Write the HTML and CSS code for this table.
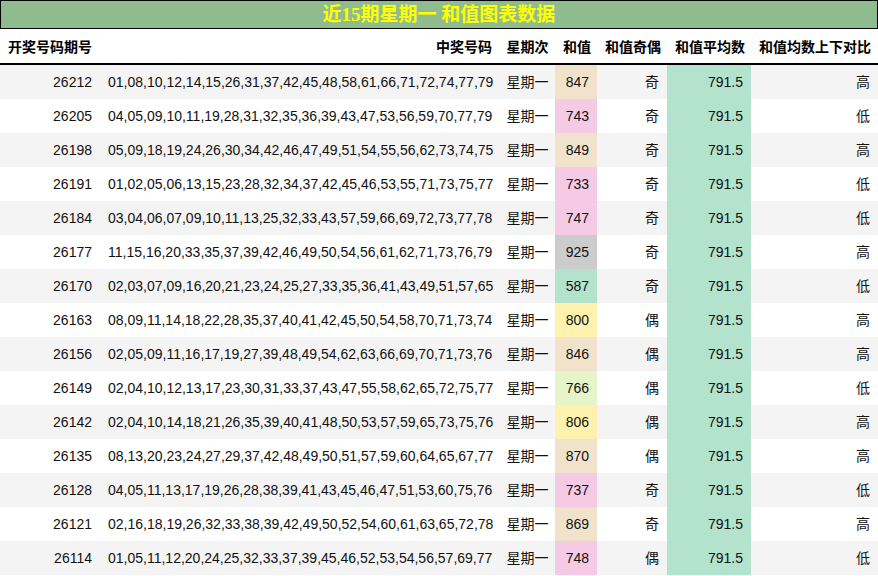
FILE: index.html
```html
<!DOCTYPE html>
<html lang="zh-CN">
<head>
<meta charset="utf-8">
<title>近15期星期一 和值图表数据</title>
<link rel="stylesheet" href="styles.css">
</head>
<body>
<div class="title">近15期星期一 和值图表数据</div>
<table class="data">
<colgroup>
<col class="c1"><col class="c2"><col class="c3"><col class="c4"><col class="c5"><col class="c6"><col class="c7">
</colgroup>
<thead>
<tr><th class="left">开奖号码期号</th><th>中奖号码</th><th class="mid">星期次</th><th>和值</th><th>和值奇偶</th><th>和值平均数</th><th>和值均数上下对比</th></tr>
</thead>
<tbody>
<tr><td>26212</td><td>01,08,10,12,14,15,26,31,37,42,45,48,58,61,66,71,72,74,77,79</td><td class="mid">星期一</td><td class="tan">847</td><td>奇</td><td class="avg">791.5</td><td>高</td></tr>
<tr><td>26205</td><td>04,05,09,10,11,19,28,31,32,35,36,39,43,47,53,56,59,70,77,79</td><td class="mid">星期一</td><td class="pink">743</td><td>奇</td><td class="avg">791.5</td><td>低</td></tr>
<tr><td>26198</td><td>05,09,18,19,24,26,30,34,42,46,47,49,51,54,55,56,62,73,74,75</td><td class="mid">星期一</td><td class="tan">849</td><td>奇</td><td class="avg">791.5</td><td>高</td></tr>
<tr><td>26191</td><td>01,02,05,06,13,15,23,28,32,34,37,42,45,46,53,55,71,73,75,77</td><td class="mid">星期一</td><td class="pink">733</td><td>奇</td><td class="avg">791.5</td><td>低</td></tr>
<tr><td>26184</td><td>03,04,06,07,09,10,11,13,25,32,33,43,57,59,66,69,72,73,77,78</td><td class="mid">星期一</td><td class="pink">747</td><td>奇</td><td class="avg">791.5</td><td>低</td></tr>
<tr><td>26177</td><td>11,15,16,20,33,35,37,39,42,46,49,50,54,56,61,62,71,73,76,79</td><td class="mid">星期一</td><td class="gray">925</td><td>奇</td><td class="avg">791.5</td><td>高</td></tr>
<tr><td>26170</td><td>02,03,07,09,16,20,21,23,24,25,27,33,35,36,41,43,49,51,57,65</td><td class="mid">星期一</td><td class="green">587</td><td>奇</td><td class="avg">791.5</td><td>低</td></tr>
<tr><td>26163</td><td>08,09,11,14,18,22,28,35,37,40,41,42,45,50,54,58,70,71,73,74</td><td class="mid">星期一</td><td class="yellow">800</td><td>偶</td><td class="avg">791.5</td><td>高</td></tr>
<tr><td>26156</td><td>02,05,09,11,16,17,19,27,39,48,49,54,62,63,66,69,70,71,73,76</td><td class="mid">星期一</td><td class="tan">846</td><td>偶</td><td class="avg">791.5</td><td>高</td></tr>
<tr><td>26149</td><td>02,04,10,12,13,17,23,30,31,33,37,43,47,55,58,62,65,72,75,77</td><td class="mid">星期一</td><td class="lime">766</td><td>偶</td><td class="avg">791.5</td><td>低</td></tr>
<tr><td>26142</td><td>02,04,10,14,18,21,26,35,39,40,41,48,50,53,57,59,65,73,75,76</td><td class="mid">星期一</td><td class="yellow">806</td><td>偶</td><td class="avg">791.5</td><td>高</td></tr>
<tr><td>26135</td><td>08,13,20,23,24,27,29,37,42,48,49,50,51,57,59,60,64,65,67,77</td><td class="mid">星期一</td><td class="tan">870</td><td>偶</td><td class="avg">791.5</td><td>高</td></tr>
<tr><td>26128</td><td>04,05,11,13,17,19,26,28,38,39,41,43,45,46,47,51,53,60,75,76</td><td class="mid">星期一</td><td class="pink">737</td><td>奇</td><td class="avg">791.5</td><td>低</td></tr>
<tr><td>26121</td><td>02,16,18,19,26,32,33,38,39,42,49,50,52,54,60,61,63,65,72,78</td><td class="mid">星期一</td><td class="tan">869</td><td>奇</td><td class="avg">791.5</td><td>高</td></tr>
<tr><td>26114</td><td>01,05,11,12,20,24,25,32,33,37,39,45,46,52,53,54,56,57,69,77</td><td class="mid">星期一</td><td class="pink">748</td><td>偶</td><td class="avg">791.5</td><td>低</td></tr>
</tbody>
</table>
</body>
</html>
```
FILE: styles.css
```css
html, body {
  margin: 0;
  padding: 0;
  background: #ffffff;
}
body {
  font-family: "Liberation Sans", "Noto Sans CJK SC", sans-serif;
  font-size: 14px;
  color: #111111;
}
.title {
  box-sizing: border-box;
  height: 29px;
  border: 1px solid #000000;
  background: #8fbc8f;
  color: #ffff00;
  font-family: "Liberation Serif", "Noto Sans CJK SC", serif;
  font-weight: bold;
  font-size: 19px;
  line-height: 27px;
  text-align: center;
}
.data {
  width: 878px;
  table-layout: fixed;
  border-collapse: collapse;
  border-spacing: 0;
}
.c1 { width: 100px; }
.c2 { width: 400px; }
.c3 { width: 55px; }
.c4 { width: 42px; }
.c5 { width: 70px; }
.c6 { width: 84px; }
.c7 { width: 127px; }
.data th, .data td {
  padding: 0 8px;
  text-align: right;
  white-space: nowrap;
  overflow: visible;
}
.data th {
  height: 34px;
  font-weight: bold;
  color: #000000;
  border-bottom: 2px solid #000000;
}
.data td {
  height: 34px;
  line-height: 34px;
}
.data th.left { text-align: left; }
.data th.mid, .data td.mid { text-align: center; padding: 0; }
.data tbody tr:nth-child(odd) { background: #f4f4f4; }
.data tbody tr:nth-child(even) { background: #ffffff; }
.data td.tan { background: #f1e2cc; }
.data td.pink { background: #f4cae4; }
.data td.gray { background: #cccccc; }
.data td.green { background: #b3e2cd; }
.data td.yellow { background: #fff2ae; }
.data td.lime { background: #e6f5c9; }
.data td.avg { background: #b3e2cd; }
```
